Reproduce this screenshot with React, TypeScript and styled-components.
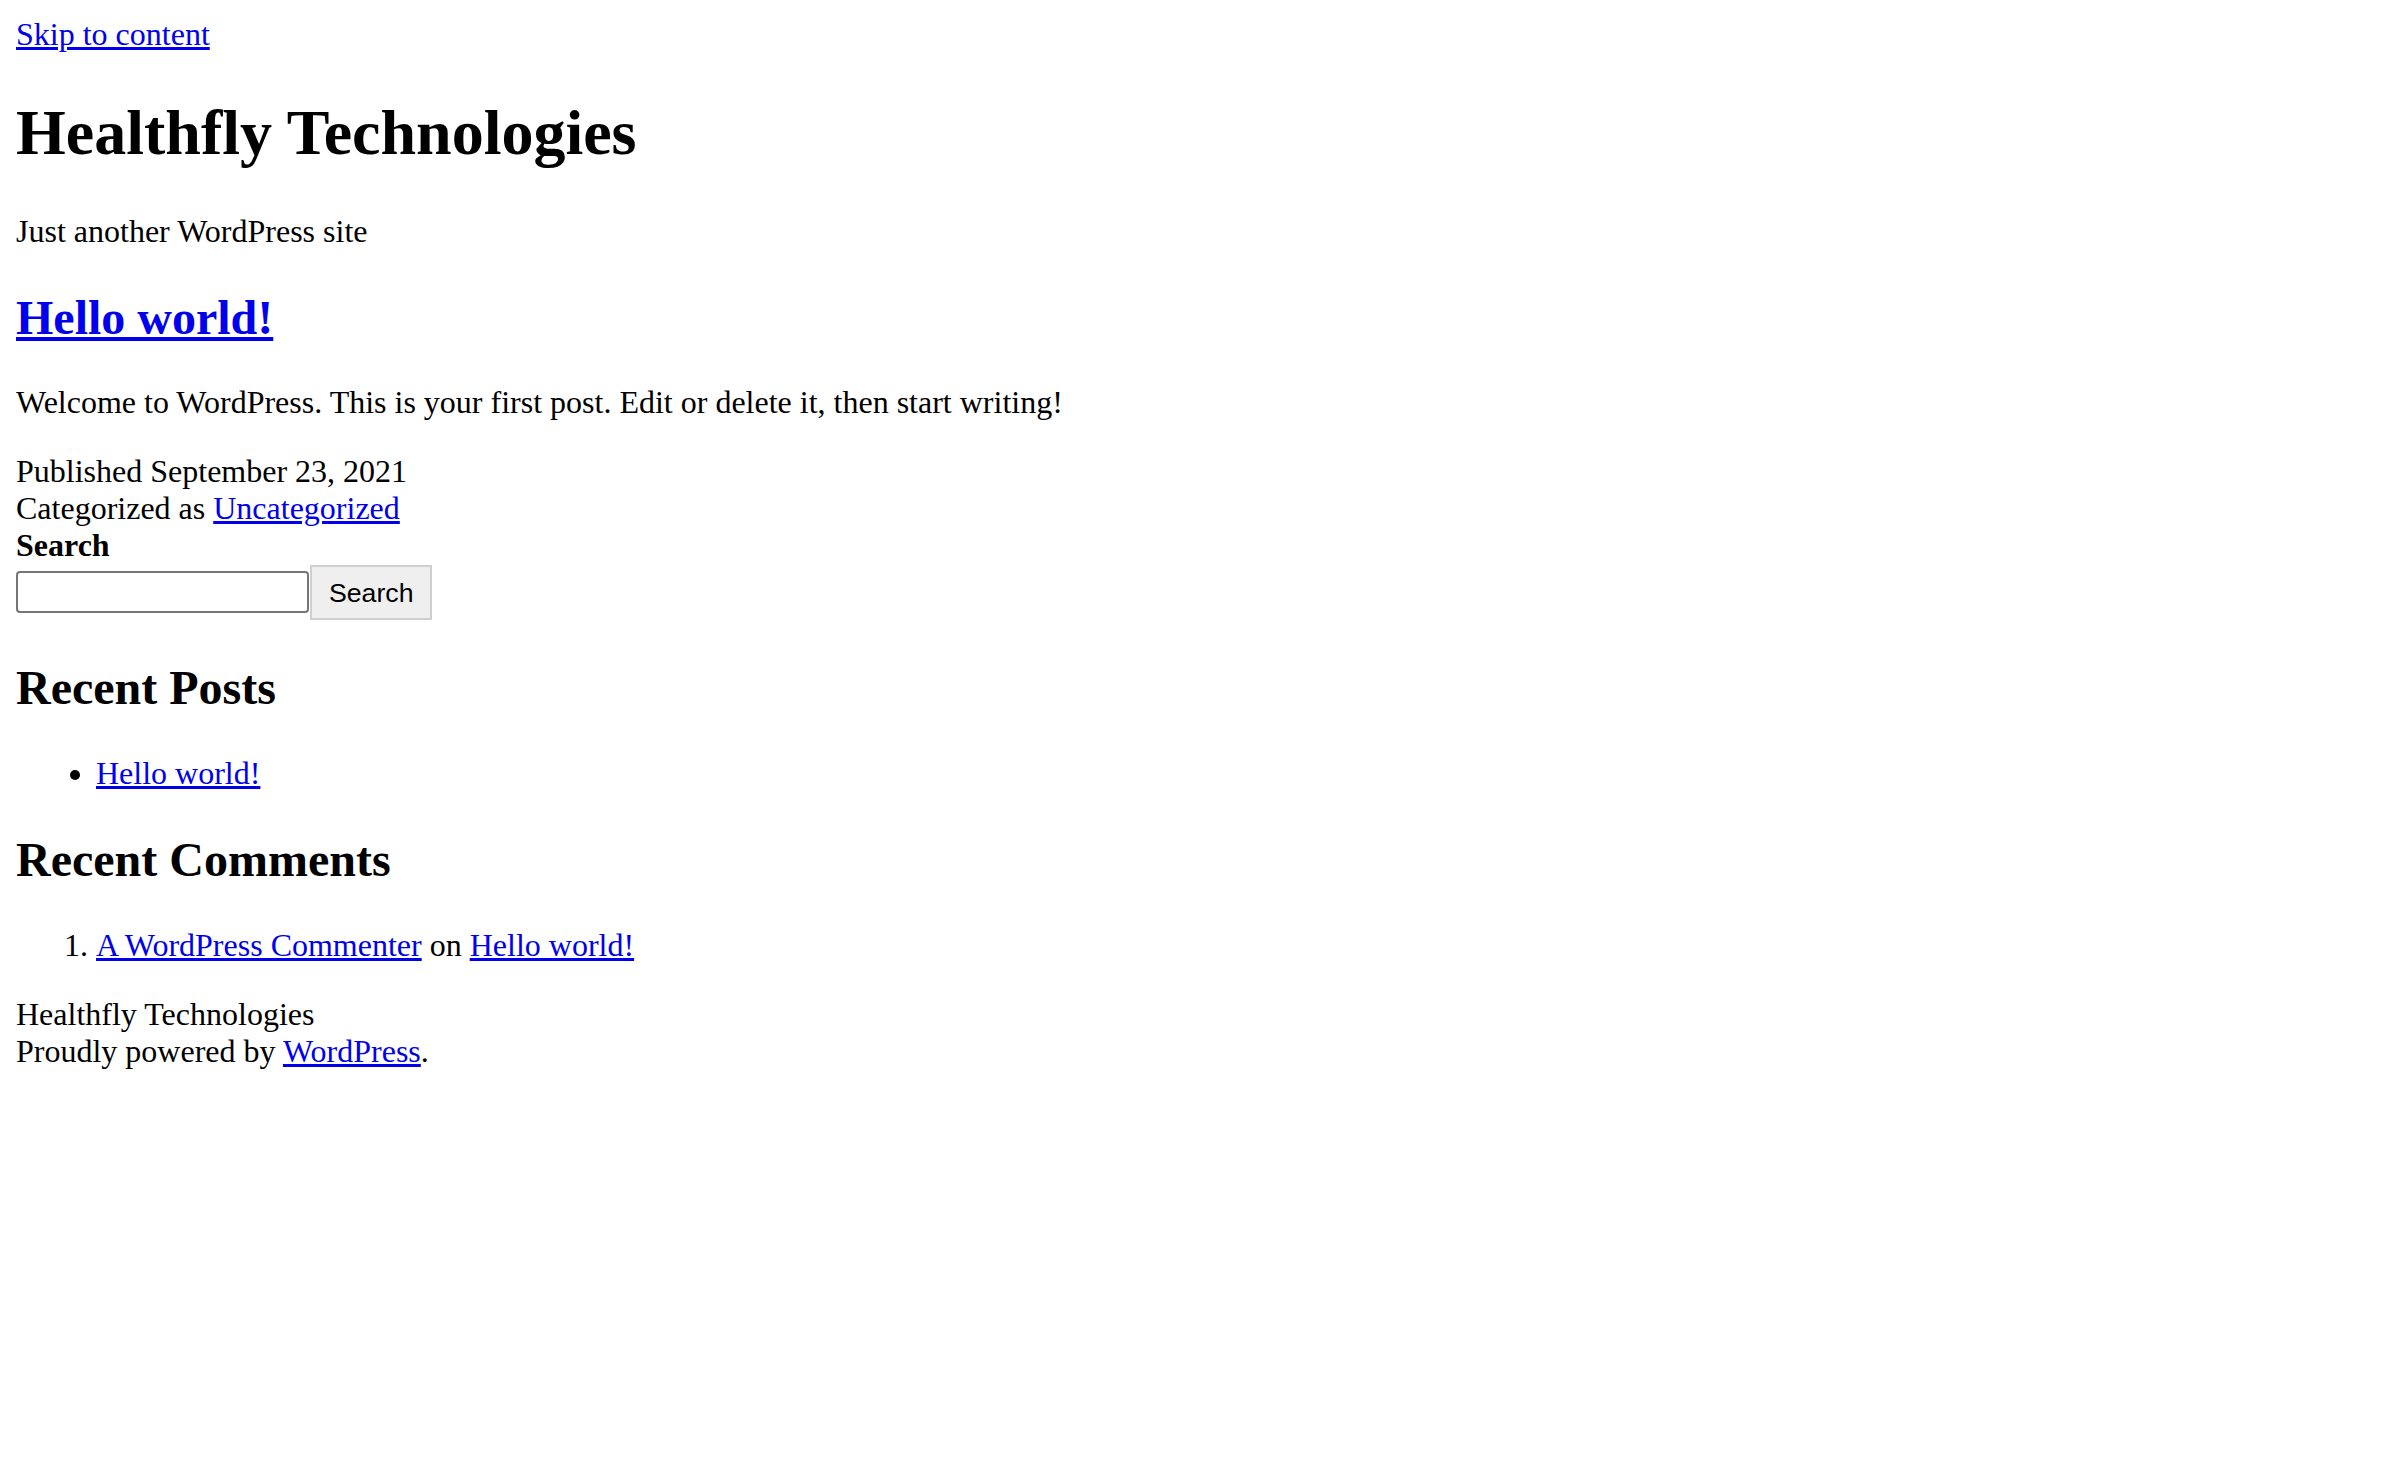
import React from "react";
import styled, { createGlobalStyle } from "styled-components";

const GlobalStyle = createGlobalStyle`
  html, body {
    background: #ffffff;
  }
  body {
    margin: 16px;
    font-family: "Liberation Serif", "Times New Roman", serif;
    font-size: 32px;
    color: #000000;
  }
  a {
    color: #0000ee;
    text-decoration: underline;
  }
`;

const SkipLink = styled.a``;

const Page = styled.div``;

const SiteHeader = styled.header``;

const SiteTitle = styled.h1`
  font-size: 2em;
  font-weight: bold;
  margin: 0.67em 0;
`;

const Tagline = styled.p`
  margin: 1em 0;
`;

const Main = styled.main``;

const Article = styled.article``;

const EntryTitle = styled.h2`
  font-size: 1.5em;
  font-weight: bold;
  margin: 0.83em 0;
`;

const Paragraph = styled.p`
  margin: 1em 0;
`;

const EntryFooter = styled.footer``;

const MetaLine = styled.span`
  display: block;
`;

const Widgets = styled.aside``;

const SearchForm = styled.form`
  margin: 0;
`;

const SearchLabel = styled.label`
  display: block;
  font-weight: bold;
`;

const SearchRow = styled.div`
  display: flex;
  align-items: flex-start;
  min-height: 56px;
  box-sizing: border-box;
`;

const SearchInput = styled.input`
  box-sizing: border-box;
  width: 293px;
  height: 42px;
  margin: 7px 0 0;
  padding: 2px 4px;
  border: 2px solid #767676;
  border-radius: 4px;
  background: #ffffff;
  font-family: "Liberation Sans", Arial, sans-serif;
  font-size: 26.67px;
`;

const SearchButton = styled.button`
  box-sizing: border-box;
  height: 55px;
  margin: 1px 0 0 1px;
  padding: 0 17px;
  border: 2px solid #cfcfcf;
  border-radius: 0;
  background: #efefef;
  color: #000000;
  font-family: "Liberation Sans", Arial, sans-serif;
  font-size: 26.67px;
  line-height: 1;
`;

const WidgetTitle = styled.h2`
  font-size: 1.5em;
  font-weight: bold;
  margin: 0.83em 0;
`;

const BulletList = styled.ul`
  margin: 1em 0;
  padding-left: 80px;
  list-style: disc;
`;

const NumberList = styled.ol`
  margin: 1em 0;
  padding-left: 80px;
  list-style: decimal;
`;

const SiteFooter = styled.footer``;

const FooterLine = styled.div``;

export default function App() {
  return (
    <>
      <GlobalStyle />
      <SkipLink href="#content">Skip to content</SkipLink>
      <Page>
        <SiteHeader>
          <SiteTitle>Healthfly Technologies</SiteTitle>
          <Tagline>Just another WordPress site</Tagline>
        </SiteHeader>
        <Main id="content">
          <Article>
            <EntryTitle>
              <a href="#">Hello world!</a>
            </EntryTitle>
            <Paragraph>
              Welcome to WordPress. This is your first post. Edit or delete it,
              then start writing!
            </Paragraph>
            <EntryFooter>
              <MetaLine>Published September 23, 2021</MetaLine>
              <MetaLine>
                Categorized as <a href="#">Uncategorized</a>
              </MetaLine>
            </EntryFooter>
          </Article>
        </Main>
        <Widgets>
          <SearchForm onSubmit={(e) => e.preventDefault()}>
            <SearchLabel htmlFor="search-input">Search</SearchLabel>
            <SearchRow>
              <SearchInput id="search-input" type="search" />
              <SearchButton type="submit">Search</SearchButton>
            </SearchRow>
          </SearchForm>
          <WidgetTitle>Recent Posts</WidgetTitle>
          <BulletList>
            <li>
              <a href="#">Hello world!</a>
            </li>
          </BulletList>
          <WidgetTitle>Recent Comments</WidgetTitle>
          <NumberList>
            <li>
              <a href="#">A WordPress Commenter</a> on{" "}
              <a href="#">Hello world!</a>
            </li>
          </NumberList>
        </Widgets>
        <SiteFooter>
          <FooterLine>Healthfly Technologies</FooterLine>
          <FooterLine>
            Proudly powered by <a href="#">WordPress</a>.
          </FooterLine>
        </SiteFooter>
      </Page>
    </>
  );
}
